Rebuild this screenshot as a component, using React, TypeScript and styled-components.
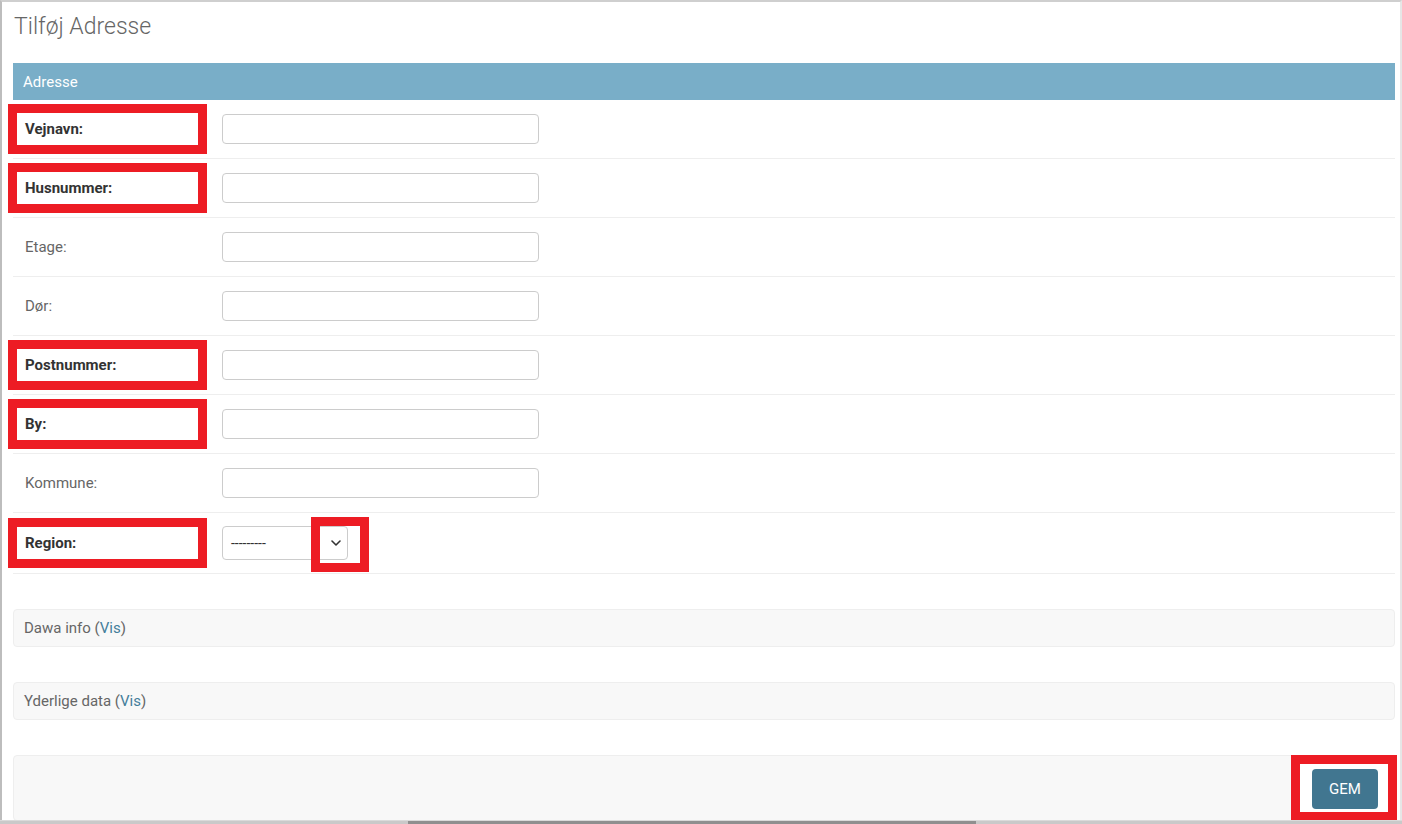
import React from 'react';
import styled, { createGlobalStyle } from 'styled-components';

const GlobalStyle = createGlobalStyle`
  html, body {
    margin: 0;
    padding: 0;
    background: #fff;
  }
  body {
    font-family: Roboto, 'Liberation Sans', Arial, sans-serif;
    color: #333;
  }
  * {
    box-sizing: border-box;
  }
`;

const MARK = '#ed1c24';

interface FieldI {
  name: string;
  required: boolean;
  marked: boolean;
}

const fields: FieldI[] = [
  { name: 'Vejnavn', required: true, marked: true },
  { name: 'Husnummer', required: true, marked: true },
  { name: 'Etage', required: false, marked: false },
  { name: 'Dør', required: false, marked: false },
  { name: 'Postnummer', required: true, marked: true },
  { name: 'By', required: true, marked: true },
  { name: 'Kommune', required: false, marked: false },
];

const collapsed = ['Dawa info', 'Yderlige data'];

const App: React.FC = () => {
  return (
    <Frame>
      <GlobalStyle />
      <Viewport>
        <Title>Tilføj Adresse</Title>
        <Form onSubmit={(e) => e.preventDefault()}>
          <Fieldset>
            <Legend>Adresse</Legend>
            {fields.map((f) => (
              <Row key={f.name}>
                <Label $required={f.required} $marked={f.marked}>
                  {f.name}:
                </Label>
                <TextInput type='text' />
              </Row>
            ))}
            <Row>
              <Label $required $marked>
                Region:
              </Label>
              <SelectWrap>
                <SelectBox role='combobox'>
                  <span>---------</span>
                  <svg width='10' height='6' viewBox='0 0 10 6'>
                    <polyline
                      points='1,1 5,5 9,1'
                      fill='none'
                      stroke='#333'
                      strokeWidth='1.6'
                      strokeLinecap='round'
                      strokeLinejoin='round'
                    />
                  </svg>
                </SelectBox>
                <ArrowMark />
              </SelectWrap>
            </Row>
          </Fieldset>

          {collapsed.map((title) => (
            <Collapsed key={title}>
              {title} (<a href='#'>Vis</a>)
            </Collapsed>
          ))}

          <SubmitRow>
            <ButtonMark>
              <SaveButton type='submit'>GEM</SaveButton>
            </ButtonMark>
          </SubmitRow>
        </Form>
      </Viewport>
      <Scrollbar>
        <Thumb />
      </Scrollbar>
    </Frame>
  );
};

const Frame = styled.div`
  display: flex;
  flex-direction: column;
  width: 1402px;
  height: 824px;
  overflow: hidden;
`;

const Viewport = styled.main`
  flex: 1;
  min-height: 0;
  overflow: hidden;
  border-left: 2px solid #bdbdbd;
  border-top: 2px solid #cfcfcf;
  border-right: 2px solid #e6e6e6;
  padding: 12px 5px 0 11px;
`;

const Title = styled.h1`
  margin: 0 0 23px 1px;
  font-size: 23px;
  line-height: 26px;
  font-weight: 300;
  color: #666;
`;

const Form = styled.form`
  display: flex;
  flex-direction: column;
  gap: 35px;
`;

const Fieldset = styled.fieldset`
  margin: 0;
  padding: 0;
  border: none;
  min-width: 0;
`;

const Legend = styled.h2`
  margin: 0;
  height: 37px;
  padding: 0 10px;
  display: flex;
  align-items: center;
  background: #79aec8;
  color: #fff;
  font-size: 15px;
  font-weight: 400;
`;

const Row = styled.div`
  display: flex;
  align-items: center;
  gap: 24px;
  padding: 13px 0;
  border-bottom: 1px solid #eee;
`;

const Label = styled.label<{ $required?: boolean; $marked?: boolean }>`
  display: flex;
  align-items: center;
  width: 181px;
  height: 32px;
  margin-left: 4px;
  padding-left: 8px;
  font-size: 15px;
  font-weight: ${(p) => (p.$required ? 700 : 400)};
  color: ${(p) => (p.$required ? '#333' : '#666')};
  outline: ${(p) => (p.$marked ? `9px solid ${MARK}` : 'none')};
`;

const TextInput = styled.input`
  width: 317px;
  height: 30px;
  border: 1px solid #ccc;
  border-radius: 4px;
  padding: 0 6px;
  font-family: inherit;
  font-size: 14px;
  background: #fff;
`;

const SelectWrap = styled.div`
  position: relative;
`;

const SelectBox = styled.div`
  display: flex;
  align-items: center;
  justify-content: space-between;
  width: 126px;
  height: 34px;
  padding: 0 6px 0 8px;
  border: 1px solid #ccc;
  border-radius: 4px;
  font-size: 14px;
  color: #333;
  background: #fff;
`;

const ArrowMark = styled.div`
  position: absolute;
  left: 89px;
  top: -9px;
  width: 58px;
  height: 55px;
  border: 9px solid ${MARK};
  pointer-events: none;
`;

const Collapsed = styled.div`
  height: 38px;
  padding: 0 10px;
  display: flex;
  align-items: center;
  background: #f8f8f8;
  border: 1px solid #eee;
  border-radius: 4px;
  font-size: 15px;
  color: #666;
  white-space: pre;

  a {
    color: #447e9b;
    text-decoration: none;
  }
`;

const SubmitRow = styled.div`
  display: flex;
  justify-content: flex-end;
  padding: 8px 6px 8px 0;
  background: #f8f8f8;
  border: 1px solid #eee;
  border-radius: 4px;
`;

const ButtonMark = styled.div`
  display: flex;
  padding: 5px 10px 3px 12px;
  outline: 9px solid ${MARK};
  background: #fff;
`;

const SaveButton = styled.button`
  width: 66px;
  height: 40px;
  border: none;
  border-radius: 4px;
  background: #417690;
  color: #fff;
  font-family: inherit;
  font-size: 15px;
  cursor: pointer;
`;

const Scrollbar = styled.div`
  height: 4px;
  flex-shrink: 0;
  background: #c9c9c9;
  border-top: 1px solid #dadada;
  display: flex;
`;

const Thumb = styled.div`
  margin-left: 408px;
  width: 568px;
  background: #8f8f8f;
`;

export default App;
